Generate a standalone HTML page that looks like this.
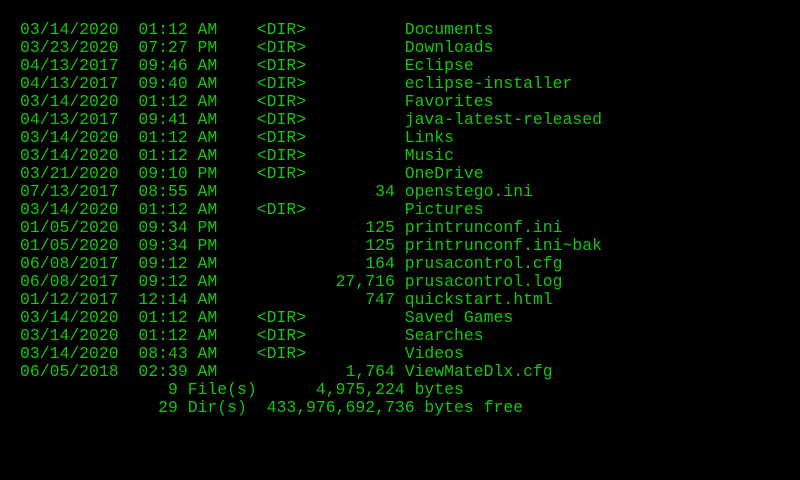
<!DOCTYPE html>
<html><head><style>
html,body{margin:0;padding:0;background:#000;width:800px;height:480px;overflow:hidden}
pre{margin:0;position:absolute;left:20px;top:21px;font-family:"Liberation Mono",monospace;font-size:16.45px;line-height:18px;color:#16c60c}
</style></head><body><pre>03/14/2020  01:12 AM    &lt;DIR&gt;          Documents
03/23/2020  07:27 PM    &lt;DIR&gt;          Downloads
04/13/2017  09:46 AM    &lt;DIR&gt;          Eclipse
04/13/2017  09:40 AM    &lt;DIR&gt;          eclipse-installer
03/14/2020  01:12 AM    &lt;DIR&gt;          Favorites
04/13/2017  09:41 AM    &lt;DIR&gt;          java-latest-released
03/14/2020  01:12 AM    &lt;DIR&gt;          Links
03/14/2020  01:12 AM    &lt;DIR&gt;          Music
03/21/2020  09:10 PM    &lt;DIR&gt;          OneDrive
07/13/2017  08:55 AM                34 openstego.ini
03/14/2020  01:12 AM    &lt;DIR&gt;          Pictures
01/05/2020  09:34 PM               125 printrunconf.ini
01/05/2020  09:34 PM               125 printrunconf.ini~bak
06/08/2017  09:12 AM               164 prusacontrol.cfg
06/08/2017  09:12 AM            27,716 prusacontrol.log
01/12/2017  12:14 AM               747 quickstart.html
03/14/2020  01:12 AM    &lt;DIR&gt;          Saved Games
03/14/2020  01:12 AM    &lt;DIR&gt;          Searches
03/14/2020  08:43 AM    &lt;DIR&gt;          Videos
06/05/2018  02:39 AM             1,764 ViewMateDlx.cfg
               9 File(s)      4,975,224 bytes
              29 Dir(s)  433,976,692,736 bytes free</pre></body></html>
